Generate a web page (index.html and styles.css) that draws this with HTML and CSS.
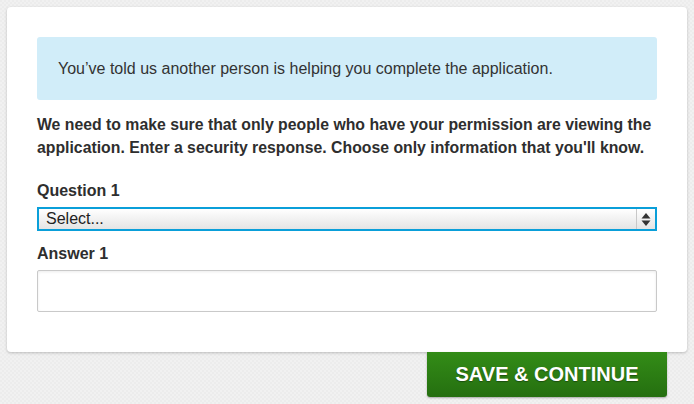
FILE: index.html
```html
<!DOCTYPE html>
<html lang="en">
<head>
<meta charset="utf-8">
<title>Security response</title>
<link rel="stylesheet" href="styles.css">
</head>
<body>
<main class="page">
  <section class="card">
    <div class="notice">You’ve told us another person is helping you complete the application.</div>
    <p class="lead">We need to make sure that only people who have your permission are viewing the application. Enter a security response. Choose only information that you'll know.</p>
    <label class="label">Question 1</label>
    <div class="select">
      <span class="select-text">Select...</span>
      <span class="select-arrows">
        <svg width="10" height="15" viewBox="0 0 10 15"><path d="M5 1 L9.5 6.5 L0.5 6.5 Z" fill="#333"/><path d="M0.5 8.5 L9.5 8.5 L5 14 Z" fill="#333"/></svg>
      </span>
    </div>
    <label class="label">Answer 1</label>
    <div class="input"></div>
  </section>
  <div class="actions">
    <button class="btn">SAVE &amp; CONTINUE</button>
  </div>
</main>
</body>
</html>
```
FILE: styles.css
```css
* { box-sizing: border-box; }
html, body { margin: 0; padding: 0; }
body {
  background-color: #ececec;
  background-image:
    linear-gradient(45deg, rgba(255,255,255,0.25) 25%, transparent 25%, transparent 75%, rgba(255,255,255,0.25) 75%),
    linear-gradient(45deg, rgba(255,255,255,0.25) 25%, transparent 25%, transparent 75%, rgba(255,255,255,0.25) 75%);
  background-size: 4px 4px;
  background-position: 0 0, 2px 2px;
  font-family: "Liberation Sans", Arial, sans-serif;
  color: #333;
  width: 694px;
  height: 404px;
  overflow: hidden;
}
.page {
  padding: 7px 7px 0 7px;
}
.card {
  width: 680px;
  background: #fff;
  border-radius: 4px;
  box-shadow: 0 1px 3px rgba(0,0,0,0.22);
  padding: 30px 30px 40px 30px;
  display: flex;
  flex-direction: column;
}
.notice {
  background: #d1edf9;
  border-radius: 3px;
  height: 63px;
  padding: 0 21px;
  display: flex;
  align-items: center;
  font-size: 16px;
  color: #333;
}
.lead {
  margin: 13px 0 0 0;
  font-size: 15.8px;
  font-weight: bold;
  line-height: 23px;
  color: #2e2e2e;
}
.label {
  display: block;
  font-size: 16px;
  font-weight: bold;
  line-height: 20px;
  margin-top: 22px;
  color: #2e2e2e;
}
.select {
  margin-top: 6px;
  height: 24px;
  border: 2px solid #0a9fd9;
  background: linear-gradient(#ffffff, #e4e4e4);
  display: flex;
  align-items: center;
  font-size: 16px;
  color: #222;
}
.select-text {
  flex: 1;
  padding-left: 7px;
}
.select-arrows {
  width: 19px;
  height: 100%;
  border-left: 1px solid #c8c8c8;
  display: flex;
  align-items: center;
  justify-content: center;
}
.select + .label { margin-top: 13px; }
.input {
  margin-top: 6px;
  height: 42px;
  border: 1px solid #c9c9c9;
  border-radius: 2px;
  box-shadow: inset 0 1px 3px rgba(0,0,0,0.08);
  background: #fff;
}
.actions {
  display: flex;
  justify-content: flex-end;
  padding-right: 20px;
}
.btn {
  width: 240px;
  height: 45px;
  border: none;
  border-radius: 0 0 3px 3px;
  background: linear-gradient(#338c17, #256f10);
  box-shadow: 0 1px 2px rgba(0,0,0,0.3);
  color: #fff;
  font-family: "Liberation Sans", Arial, sans-serif;
  font-weight: bold;
  font-size: 20px;
  text-shadow: 0 1px 1px rgba(0,0,0,0.35);
  padding: 0;
}
```
